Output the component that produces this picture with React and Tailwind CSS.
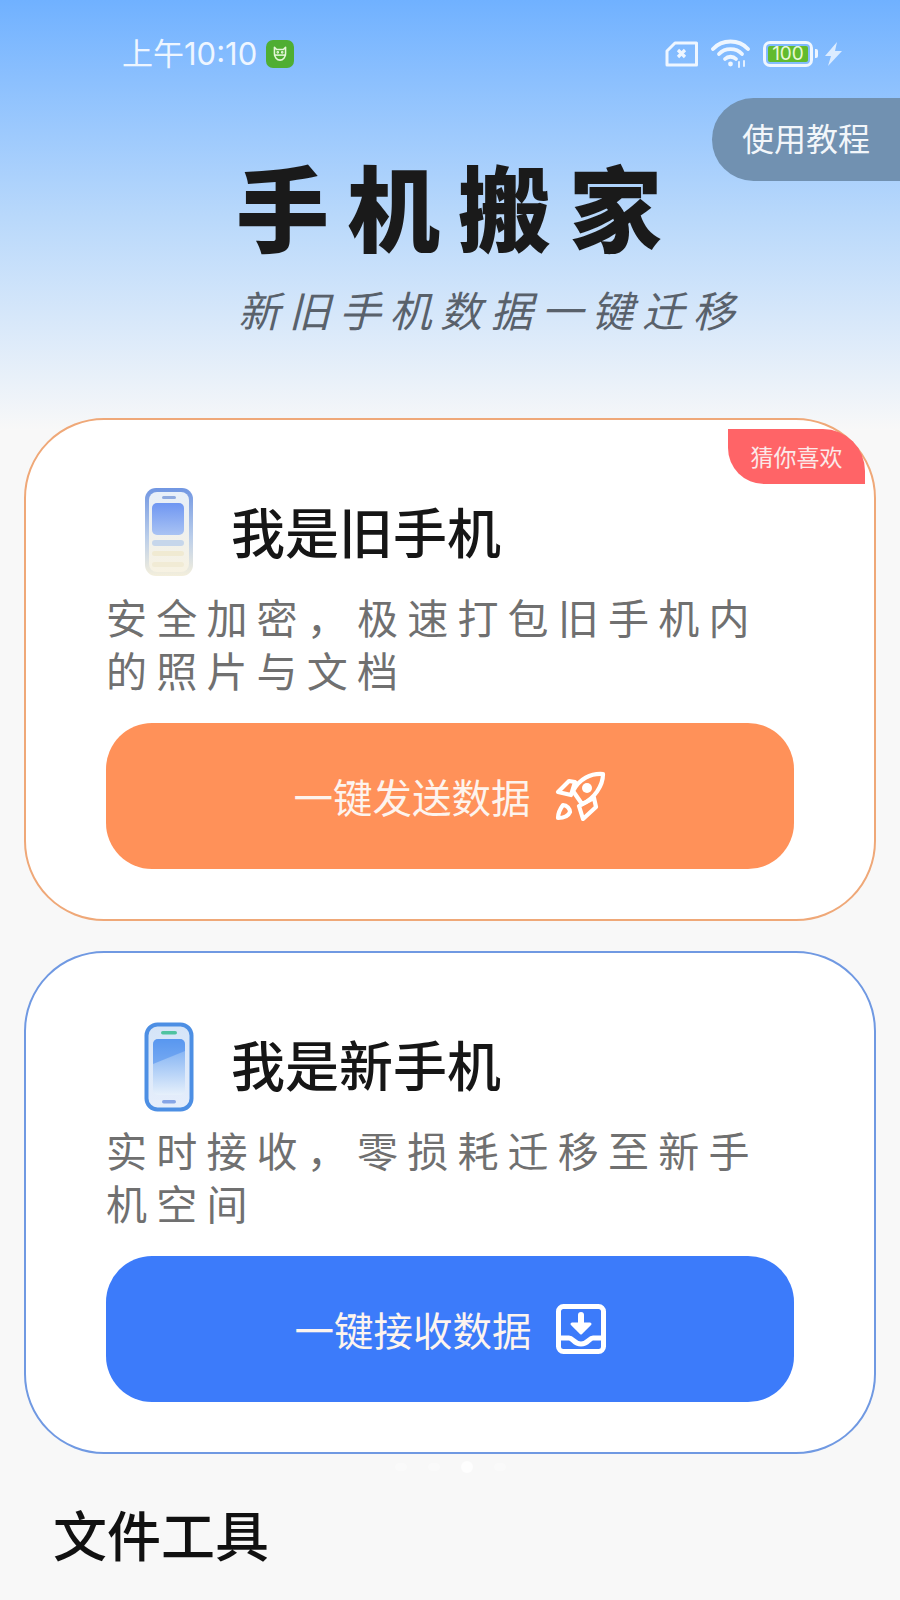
import { useId } from 'react'

const cjk = "font-['Noto_Sans_CJK_SC','Noto_Sans',sans-serif]"

function AppBadge() {
  return (
    <div className="w-[28px] h-[28px] rounded-[7px] bg-[#4fae32] flex items-center justify-center">
      <svg width="20" height="20" viewBox="0 0 18 18" fill="none" stroke="#e4f7d8" strokeWidth="1.4">
        <path d="M4 3l2 2h6l2-2v5.5a5 6 0 0 1-10 0z" strokeLinejoin="round" />
        <path d="M3.5 10h11" />
        <circle cx="7" cy="7.5" r=".5" />
        <circle cx="11" cy="7.5" r=".5" />
      </svg>
    </div>
  )
}

function StatusIcons() {
  return (
    <div className="flex items-center">
      <svg width="34" height="26" viewBox="0 0 34 26" fill="none" stroke="#eef6ff" strokeWidth="3" strokeLinejoin="round">
        <path d="M10 2h21.5v22H2V10z" />
        <path d="M13 9l7 7M20 9l-7 7" strokeWidth="3.2" />
      </svg>
      <svg className="ml-[12px]" width="40" height="30" viewBox="0 0 40 30" fill="none" stroke="#eef6ff" strokeWidth="3.8" strokeLinecap="round">
        <path d="M2 10C11 0 28 0 37 10" />
        <path d="M8 15C14 8.5 25 8.5 31 15" />
        <path d="M14 20c3-3 8-3 11 0" />
        <circle cx="19.5" cy="25" r="2.4" fill="#eef6ff" stroke="none" />
        <path d="M28 23v5M33 22v5" strokeWidth="1.8" />
      </svg>
      <div className="ml-[12px] w-[50px] h-[26px] rounded-[7px] border-[3px] border-[#eef6ff] p-[2px] flex">
        <div className="flex-1 rounded-[2px] bg-[#62bb2e] flex items-center justify-center text-[19px] leading-none text-[#e8f8d8] font-['Inter',sans-serif]">
          100
        </div>
      </div>
      <div className="ml-[2px] w-[3px] h-[9px] rounded-r-[2px] bg-[#eef6ff]" />
      <svg className="ml-[6px]" width="19" height="24" viewBox="0 0 19 24" fill="#dcecff">
        <path d="M13 0L1 14h6l-3 10L18 9h-7z" />
      </svg>
    </div>
  )
}

function OldPhone() {
  const id = useId()
  return (
    <svg width="50" height="92" viewBox="0 0 50 92">
      <defs>
        <linearGradient id={id + 'a'} x1="0" y1="0" x2="0" y2="1">
          <stop offset="0" stopColor="#7196e2" />
          <stop offset=".55" stopColor="#b9cdea" />
          <stop offset="1" stopColor="#f4efdc" />
        </linearGradient>
        <linearGradient id={id + 'b'} x1="0" y1="0" x2="0" y2="1">
          <stop offset="0" stopColor="#e8eff9" />
          <stop offset="1" stopColor="#f7f2e2" />
        </linearGradient>
        <linearGradient id={id + 'c'} x1="0" y1="0" x2="0" y2="1">
          <stop offset="0" stopColor="#6f96f2" />
          <stop offset="1" stopColor="#a9c3f3" />
        </linearGradient>
      </defs>
      <rect x="1" y="1" width="48" height="88" rx="11" fill={`url(#${id}a)`} />
      <rect x="5" y="5" width="40" height="80" rx="8" fill={`url(#${id}b)`} />
      <rect x="18" y="9" width="14" height="3" rx="1.5" fill="#8faadf" />
      <rect x="8" y="16" width="32" height="32" rx="5" fill={`url(#${id}c)`} />
      <rect x="8" y="53" width="32" height="6" rx="3" fill="#c6d6eb" />
      <rect x="8" y="64" width="32" height="5" rx="2.5" fill="#f0ead2" />
      <rect x="8" y="75" width="32" height="5" rx="2.5" fill="#f1ebd5" />
    </svg>
  )
}

function NewPhone() {
  const id = useId()
  return (
    <svg className="mt-[3px]" width="50" height="92" viewBox="0 0 50 92">
      <defs>
        <linearGradient id={id + 'a'} x1="0" y1="0" x2="0" y2="1">
          <stop offset="0" stopColor="#d4e4f8" />
          <stop offset="1" stopColor="#e6eefb" />
        </linearGradient>
        <linearGradient id={id + 'b'} x1="0" y1="0" x2="0" y2="1">
          <stop offset="0" stopColor="#6ea6f2" />
          <stop offset="1" stopColor="#e6f0fb" />
        </linearGradient>
      </defs>
      <rect x="2.5" y="2.5" width="45" height="85" rx="11" fill={`url(#${id}a)`} stroke="#4d8fe4" strokeWidth="4" />
      <rect x="17" y="9" width="16" height="3.5" rx="1.75" fill="#4fc3a1" />
      <rect x="9" y="17" width="32" height="56" rx="5" fill={`url(#${id}b)`} />
      <path d="M9 22a5 5 0 0 1 5-5h22a5 5 0 0 1 5 5v7L9 42z" fill="#3f86ee" opacity=".45" />
      <rect x="18" y="78" width="14" height="3.5" rx="1.75" fill="#86a5e6" />
    </svg>
  )
}

function RocketIcon() {
  return (
    <svg width="52" height="50" viewBox="0 0 50 50" fill="none" stroke="#fff" strokeWidth="4.2" strokeLinejoin="round" strokeLinecap="round">
      <path d="M47 3C35 2 23 8 17 20l9 13C38 28 47 15 47 3z" />
      <path d="M19 11L13 10 2 21l13 3z" />
      <path d="M38 27l2 9-13 12-4-13z" />
      <path d="M7 34c-3 4-5 9-5 13 4 0 10-1 12-6 0-3-3-7-7-7z" />
      <circle cx="31" cy="17" r="5" fill="#fff" stroke="none" />
    </svg>
  )
}

function InboxIcon() {
  return (
    <svg width="50" height="50" viewBox="0 0 50 50" fill="none" stroke="#fff" strokeWidth="5" strokeLinejoin="round" strokeLinecap="round">
      <rect x="2.5" y="2.5" width="45" height="45" rx="5" />
      <path d="M2 34h11c4 0 5 6 12 6s8-6 12-6h11" />
      <path d="M25 11v14" strokeWidth="6" />
      <path d="M16 20h18l-9 9z" fill="#fff" strokeWidth="3" />
    </svg>
  )
}

function PhoneCard({ border, phone, title, desc, btnBg, btnText, icon, badge, marginTop }) {
  return (
    <div className={`relative mx-[24px] h-[503px] rounded-[80px] border-2 bg-white px-[80px] pt-[67px] ${border} ${marginTop}`}>
      {badge && (
        <div className={`absolute top-[9px] right-[9px] w-[137px] h-[55px] bg-[#ff6467] rounded-tr-[42px] rounded-bl-[36px] flex items-center justify-center text-[23px] text-[#fbe9e9] ${cjk}`}>
          {badge}
        </div>
      )}
      <div className="flex items-center ml-[38px] h-[92px]">
        {phone}
        <div className={`ml-[37px] pb-[4px] text-[54px] leading-none font-medium text-[#161616] ${cjk}`}>{title}</div>
      </div>
      <div className={`mt-[11px] text-[41px] leading-[53px] tracking-[9.2px] text-[#707070] ${cjk}`}>{desc}</div>
      <div className={`mt-[27px] h-[146px] rounded-[46px] flex items-center justify-center ${btnBg}`}>
        <span className={`text-[39.5px] text-[#fdf4ee] ${cjk}`}>{btnText}</span>
        <span className="ml-[24px]">{icon}</span>
      </div>
    </div>
  )
}

export default function App() {
  return (
    <div className="relative w-[900px] h-[1600px] overflow-hidden bg-[#f8f8f8]">
      {/* top gradient */}
      <div className="bg-gradient-to-b from-[#70b1ff] via-[#b8d8fb] to-[#f8f8f8] h-[430px]">
        <div className="flex items-center justify-between pl-[122px] pr-[57px] pt-[39px] h-[68px]">
          <div className="flex items-center">
            <span className={`text-[31px] leading-[28px] text-[#eef6ff] font-['Inter','Noto_Sans_CJK_SC',sans-serif]`}>上午10:10</span>
            <span className="ml-[9px]"><AppBadge /></span>
          </div>
          <StatusIcons />
        </div>

        <div className={`mt-[82px] pl-[236px] text-[93px] leading-[110px] font-black tracking-[18px] text-[#1a1a1a] whitespace-nowrap ${cjk}`}>
          手机搬家
        </div>
        <div className={`mt-[23px] pl-[238px] text-[42px] leading-[52px] italic tracking-[8.5px] text-[#59616b] whitespace-nowrap ${cjk}`}>
          新旧手机数据一键迁移
        </div>
      </div>

      <div className={`absolute top-[98px] right-0 w-[188px] h-[83px] rounded-l-[42px] bg-[#7191b1] flex items-center pl-[30px] pb-[6px] text-[32px] text-[#f2f6fa] ${cjk}`}>
        使用教程
      </div>

      <PhoneCard
        border="border-[#efa878]"
        marginTop="-mt-[12px]"
        phone={<OldPhone />}
        title="我是旧手机"
        desc="安全加密，极速打包旧手机内的照片与文档"
        btnBg="bg-[#ff9159]"
        btnText="一键发送数据"
        icon={<RocketIcon />}
        badge="猜你喜欢"
      />
      <PhoneCard
        border="border-[#7099e2]"
        marginTop="mt-[30px]"
        phone={<NewPhone />}
        title="我是新手机"
        desc="实时接收，零损耗迁移至新手机空间"
        btnBg="bg-[#3c7bfa]"
        btnText="一键接收数据"
        icon={<InboxIcon />}
      />

      <div className="flex justify-center items-center gap-[21px] h-[8px] mt-[9px]">
        <div className="w-[12px] h-[8px] rounded-full bg-white/30" />
        <div className="w-[12px] h-[8px] rounded-full bg-white/30" />
        <div className="w-[12px] h-[12px] rounded-full bg-white/80" />
        <div className="w-[12px] h-[8px] rounded-full bg-white/30" />
      </div>

      <div className={`mt-[32px] pl-[53px] text-[54px] leading-[62px] font-medium text-[#111] ${cjk}`}>文件工具</div>
    </div>
  )
}
